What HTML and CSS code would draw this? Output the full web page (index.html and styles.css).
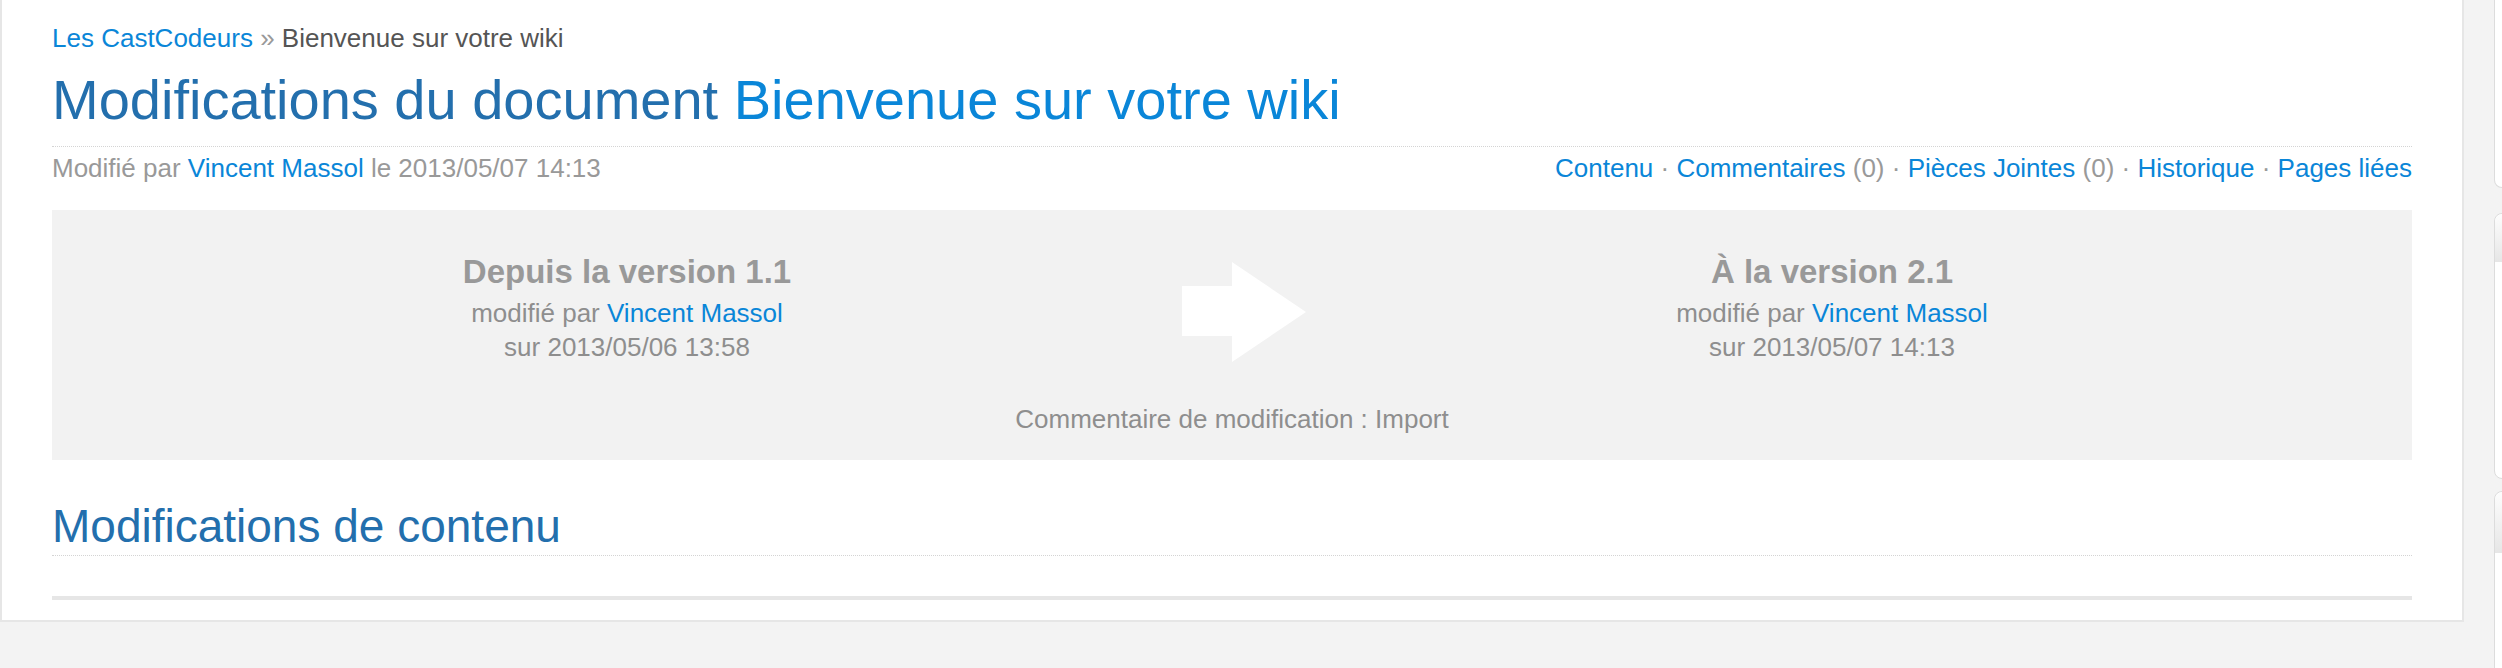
FILE: index.html
```html
<!DOCTYPE html>
<html lang="fr">
<head>
  <meta charset="UTF-8">
  <title>Modifications du document Bienvenue sur votre wiki</title>
  <link rel="stylesheet" href="styles.css">
</head>
<body>

<div id="page">
  <div id="contenu">
    <div class="chemin">
      <a href="#">Les CastCodeurs</a> <span class="sep">»</span> <span class="courant">Bienvenue sur votre wiki</span>
    </div>

    <h1 class="titre">Modifications du document <a href="#">Bienvenue sur votre wiki</a></h1>

    <div class="meta">
      <div class="auteur">Modifié par <a href="#">Vincent Massol</a> le 2013/05/07 14:13</div>
      <div class="onglets">
        <a href="#">Contenu</a> · <a href="#">Commentaires</a> <span class="nb">(0)</span> ·
        <a href="#">Pièces Jointes</a> <span class="nb">(0)</span> ·
        <a href="#">Historique</a> · <a href="#">Pages liées</a>
      </div>
    </div>

    <!-- resume des versions comparees -->
    <div class="versions">
      <div class="colonnes">
        <div class="version">
          <div class="nom">Depuis la version 1.1</div>
          <div class="info">modifié par <a href="#">Vincent Massol</a></div>
          <div class="info">sur 2013/05/06 13:58</div>
        </div>
        <div class="fleche">
          <svg width="124" height="100" viewBox="0 0 124 100">
            <polygon points="0,24 50,24 50,0 124,50 50,100 50,74 0,74" fill="#fff"/>
          </svg>
        </div>
        <div class="version">
          <div class="nom">À la version 2.1</div>
          <div class="info">modifié par <a href="#">Vincent Massol</a></div>
          <div class="info">sur 2013/05/07 14:13</div>
        </div>
      </div>
      <div class="commentaire">Commentaire de modification : Import</div>
    </div>

    <h2 class="section">Modifications de contenu</h2>
    <div class="barre"></div>
  </div>

  <div id="colonne">
    <div class="panneau premier"></div>
    <div class="panneau"><div class="entete"></div></div>
    <div class="panneau dernier"><div class="entete"></div></div>
  </div>
</div>

</body>
</html>
```

FILE: styles.css
```css
html {
  overflow: hidden;
}

body {
  margin: 0;
  background-color: #f3f3f3;
  font-family: "Liberation Sans", Arial, sans-serif;
  font-size: 26px;
  color: #999;
}

a {
  color: #0a86d8;
  text-decoration: none;
}

#page {
  display: flex;
  align-items: flex-start;
  gap: 30px;
}

/* Contenu principal */
#contenu {
  flex: none;
  width: 2360px;
  padding: 20px 50px 20px 50px;
  background-color: #fff;
  border: 2px solid #e6e6e6;
  border-top: none;
}

.chemin {
  line-height: 36px;
}

.chemin .courant {
  color: #555;
}

.titre {
  margin: 10px 0 0 0;
  padding-bottom: 12px;
  font-size: 56px;
  font-weight: normal;
  line-height: 68px;
  color: #236fad;
  border-bottom: 1px dotted #d4d4d4;
}

.meta {
  display: flex;
  justify-content: space-between;
  margin-top: 3px;
  line-height: 36px;
}

.versions {
  margin-top: 24px;
  height: 250px;
  box-sizing: border-box;
  padding-top: 40px;
  background-color: #f2f2f2;
  text-align: center;
}

.colonnes {
  display: grid;
  grid-template-columns: 1150px 84px 1092px;
}

.nom {
  font-size: 33px;
  font-weight: bold;
  line-height: 44px;
  margin-bottom: 2px;
}

.info {
  line-height: 34px;
  color: #8e8e8e;
}

.fleche {
  margin-top: 12px;
}

.fleche svg {
  display: block;
  margin-left: -20px;
}

.commentaire {
  margin-top: 38px;
  line-height: 34px;
  color: #8e8e8e;
}

.section {
  margin: 39px 0 0 0;
  padding-bottom: 2px;
  font-size: 46px;
  font-weight: normal;
  line-height: 54px;
  color: #236fad;
  border-bottom: 1px dotted #d4d4d4;
}

.barre {
  margin-top: 40px;
  height: 4px;
  background-color: #e6e6e6;
}

/* Colonne de droite */
#colonne {
  flex: none;
  width: 300px;
}

.panneau {
  height: 264px;
  margin-top: 25px;
  background-color: #fff;
  border: 1px solid #dcdcdc;
  border-radius: 8px;
}

.premier {
  height: 187px;
  margin-top: 0;
  border-top: none;
  border-radius: 0 0 8px 8px;
}

.dernier {
  margin-top: 12px;
  height: 300px;
}

.entete {
  height: 48px;
  border-radius: 8px 8px 0 0;
  background: linear-gradient(#fdfdfd, #e6e6e6);
}

.dernier .entete {
  height: 61px;
}
```
